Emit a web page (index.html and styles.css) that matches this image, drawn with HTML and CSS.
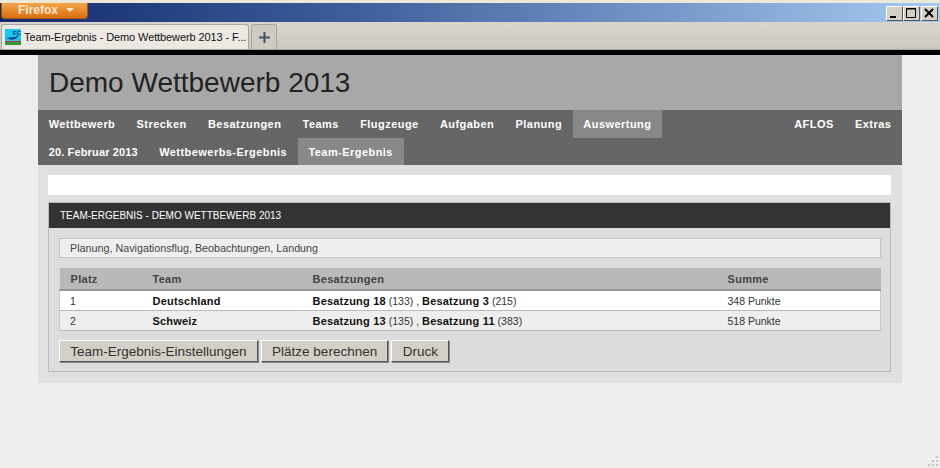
FILE: index.html
```html
<!DOCTYPE html>
<html lang="de">
<head>
  <meta charset="UTF-8">
  <title>Team-Ergebnis - Demo Wettbewerb 2013</title>
  <link rel="stylesheet" href="styles.css">
</head>
<body>

  <!-- browser window chrome -->
  <div class="titlebar">
    <div class="ff-button">Firefox <span class="ff-arrow"></span></div>
    <div class="win-buttons">
      <div class="win-btn">
        <svg width="16" height="14" viewBox="0 0 16 14"><rect x="4" y="10" width="6" height="2" fill="#000"/></svg>
      </div>
      <div class="win-btn">
        <svg width="16" height="14" viewBox="0 0 16 14"><path d="M3.5 2.5h9v9h-9z M3 3h10" fill="none" stroke="#000"/></svg>
      </div>
      <div class="win-btn win-close">
        <svg width="16" height="14" viewBox="0 0 16 14"><path d="M4 3l8 8M12 3l-8 8" fill="none" stroke="#000" stroke-width="2"/></svg>
      </div>
    </div>
  </div>
  <div class="tabbar">
    <div class="tab">
      <svg class="favicon" width="16" height="16" viewBox="0 0 16 16">
        <rect width="16" height="16" fill="#19c8e8"/>
        <rect y="13" width="16" height="3" fill="#2f9a3a"/>
        <rect y="12" width="16" height="1" fill="#c23a3a"/>
        <path d="M1 9l9-1 3-2-1 3-5 2z" fill="#1c3f8f"/>
        <text class="favicon-text" x="8" y="6">FC</text>
      </svg>
      <span class="tab-title">Team-Ergebnis - Demo Wettbewerb 2013 - F...</span>
    </div>
    <div class="newtab">
      <svg width="13" height="13" viewBox="0 0 13 13"><path d="M6.5 1v11M1 6.5h11" stroke="#3f556c" stroke-width="2"/></svg>
    </div>
  </div>
  <div class="blackline"></div>

  <div class="page">
    <div class="site-head">
      <h1>Demo Wettbewerb 2013</h1>
    </div>

    <div class="nav">
      <div class="nav-row">
        <a class="nav-item">Wettbewerb</a>
        <a class="nav-item">Strecken</a>
        <a class="nav-item">Besatzungen</a>
        <a class="nav-item">Teams</a>
        <a class="nav-item">Flugzeuge</a>
        <a class="nav-item">Aufgaben</a>
        <a class="nav-item">Planung</a>
        <a class="nav-item active">Auswertung</a>
        <a class="nav-item push">AFLOS</a>
        <a class="nav-item">Extras</a>
      </div>
      <div class="nav-row">
        <a class="nav-item nav-date">20. Februar 2013</a>
        <a class="nav-item">Wettbewerbs-Ergebnis</a>
        <a class="nav-item active">Team-Ergebnis</a>
      </div>
    </div>

    <div class="content">
      <div class="whitebar"></div>

      <div class="panel">
        <div class="panel-head">TEAM-ERGEBNIS - DEMO WETTBEWERB 2013</div>
        <div class="panel-body">
          <div class="info">Planung, Navigationsflug, Beobachtungen, Landung</div>

          <table class="results">
            <thead>
              <tr>
                <th class="col-platz">Platz</th>
                <th class="col-team">Team</th>
                <th class="col-crew">Besatzungen</th>
                <th>Summe</th>
              </tr>
            </thead>
            <tbody>
              <tr>
                <td>1</td>
                <td><b>Deutschland</b></td>
                <td><b>Besatzung 18</b> (133) , <b>Besatzung 3</b> (215)</td>
                <td>348 Punkte</td>
              </tr>
              <tr class="odd">
                <td>2</td>
                <td><b>Schweiz</b></td>
                <td><b>Besatzung 13</b> (135) , <b>Besatzung 11</b> (383)</td>
                <td>518 Punkte</td>
              </tr>
            </tbody>
          </table>

          <div class="buttons">
            <button type="button">Team-Ergebnis-Einstellungen</button>
            <button type="button">Plätze berechnen</button>
            <button type="button">Druck</button>
          </div>
        </div>
      </div>
    </div>
  </div>

  <svg class="grip" width="12" height="12" viewBox="0 0 12 12" fill="#c4c4c4">
    <rect x="8" y="0" width="2" height="2"/>
    <rect x="4" y="4" width="2" height="2"/><rect x="8" y="4" width="2" height="2"/>
    <rect x="0" y="8" width="2" height="2"/><rect x="4" y="8" width="2" height="2"/><rect x="8" y="8" width="2" height="2"/>
  </svg>

</body>
</html>
```

FILE: styles.css
```css
html, body {
  margin: 0;
  height: 468px;
  overflow: hidden;
}

body {
  position: relative;
  font-family: "Liberation Sans", Arial, sans-serif;
  font-size: 11px;
  color: #333;
  background-color: #eee;
}

/* browser chrome */
.titlebar {
  display: flex;
  justify-content: space-between;
  height: 19px;
  padding-top: 3px;
  background: linear-gradient(to right, #12296b, #3a5a98 35%, #a6caf0);
  box-shadow: inset 0 3px 0 #ece9d8;
}

.ff-button {
  width: 87px;
  height: 16px;
  margin-left: 1px;
  box-sizing: border-box;
  padding-left: 16px;
  line-height: 15px;
  font-size: 12px;
  font-weight: bold;
  color: #fbe7cf;
  background: linear-gradient(#f5a64a, #d96f10);
  border: 1px solid #a85a10;
  border-top: 0;
  border-radius: 0 0 4px 4px;
}

.ff-arrow {
  display: inline-block;
  margin-left: 5px;
  margin-bottom: 2px;
  border: 4px solid transparent;
  border-top: 4px solid #fbe7cf;
  border-bottom: 0;
}

.win-buttons {
  display: flex;
  gap: 1px;
  margin-right: 3px;
  margin-top: 3px;
}

.win-btn {
  width: 16px;
  height: 14px;
  background-color: #d4d0c8;
  box-shadow: inset 1px 1px 0 #fff, 1px 1px 0 #555;
}

.win-btn svg {
  display: block;
}

.win-close {
  margin-left: 1px;
}

.tabbar {
  display: flex;
  align-items: flex-end;
  gap: 2px;
  height: 27px;
  padding-left: 1px;
  background: linear-gradient(#d9d5cd, #cdc9c1);
  border-bottom: 1px solid #aaa69e;
}

.tab {
  display: flex;
  align-items: center;
  gap: 3px;
  width: 248px;
  height: 25px;
  box-sizing: border-box;
  padding-left: 3px;
  font-size: 11px;
  letter-spacing: -0.1px;
  color: #111;
  background-color: #ece9e3;
  border: 1px solid #aaa69e;
  border-bottom: 0;
  border-radius: 3px 3px 0 0;
}

.favicon {
  flex: none;
}

.favicon-text {
  font-family: "Liberation Sans", Arial, sans-serif;
  font-size: 6px;
  font-weight: bold;
  letter-spacing: 0;
  fill: #12306e;
}

.tab-title {
  white-space: nowrap;
}

.newtab {
  display: flex;
  align-items: center;
  justify-content: center;
  width: 26px;
  height: 25px;
  box-sizing: border-box;
  background-color: #cfcbc3;
  border: 1px solid #aaa69e;
  border-bottom: 0;
  border-radius: 3px 3px 0 0;
}

.blackline {
  height: 5px;
  background-color: #000;
}

/* page */
.page {
  width: 864px;
  margin-left: 38px;
}

.site-head {
  height: 55px;
  background-color: #a8a8a8;
}

h1 {
  margin: 0;
  padding: 12px 0 0 11px;
  font-size: 28px;
  font-weight: normal;
  line-height: 32px;
  color: #222;
}

.nav {
  background-color: #666;
}

.nav-row {
  display: flex;
  height: 27.5px;
}

.nav-item {
  padding: 0 10.65px;
  line-height: 28px;
  font-size: 11px;
  font-weight: bold;
  letter-spacing: 0.45px;
  color: #fff;
}

.nav-date {
  letter-spacing: 0.15px;
}

.nav-item.active {
  background-color: #888;
}

.nav-item.push {
  margin-left: auto;
}

.content {
  padding: 10px 11px 11px 10px;
  background-color: #e0e0e0;
}

.whitebar {
  height: 20px;
  margin-bottom: 7px;
  background-color: #fff;
}

.panel {
  border: 1px solid #bbb;
  background-color: #ddd;
}

.panel-head {
  height: 25px;
  padding-left: 11px;
  line-height: 25px;
  font-size: 10px;
  color: #fff;
  background-color: #333;
}

.panel-body {
  padding: 10px 9px 9px 10px;
}

.info {
  height: 18px;
  padding-left: 10px;
  line-height: 18px;
  font-size: 10.75px;
  color: #444;
  background-color: #eee;
  border: 1px solid #c4c4c4;
}

.results {
  width: 100%;
  margin-top: 10px;
  border-collapse: collapse;
  table-layout: fixed;
}

.results th {
  height: 21px;
  padding: 0 0 0 11px;
  text-align: left;
  font-weight: bold;
  letter-spacing: 0.3px;
  color: #444;
  background-color: #b9b9b9;
  border-bottom: 2px solid #999;
}

.col-platz {
  width: 71px;
}

.col-team {
  width: 149px;
}

.col-crew {
  width: 404px;
}

.results td {
  height: 19px;
  padding: 0 0 0 11px;
  font-size: 10.5px;
  background-color: #fff;
  border-bottom: 1px solid #bbb;
}

.results td:first-child {
  padding-left: 10px;
  border-left: 1px solid #ccc;
}

.results td:last-child {
  border-right: 1px solid #ccc;
}

.results td b {
  font-size: 11px;
  letter-spacing: 0.2px;
  color: #111;
}

.results tr.odd td {
  background-color: #eee;
}

.buttons {
  display: flex;
  gap: 3px;
  margin-top: 9px;
}

button {
  height: 22px;
  padding: 0 10.25px;
  font-family: "Liberation Sans", Arial, sans-serif;
  font-size: 13.5px;
  color: #333;
  background-color: #d4d0c8;
  border: 1px solid;
  border-color: #fff #555 #555 #fff;
  box-shadow: 1px 1px 0 #888;
}

.grip {
  position: absolute;
  right: 0;
  bottom: 0;
}
```
